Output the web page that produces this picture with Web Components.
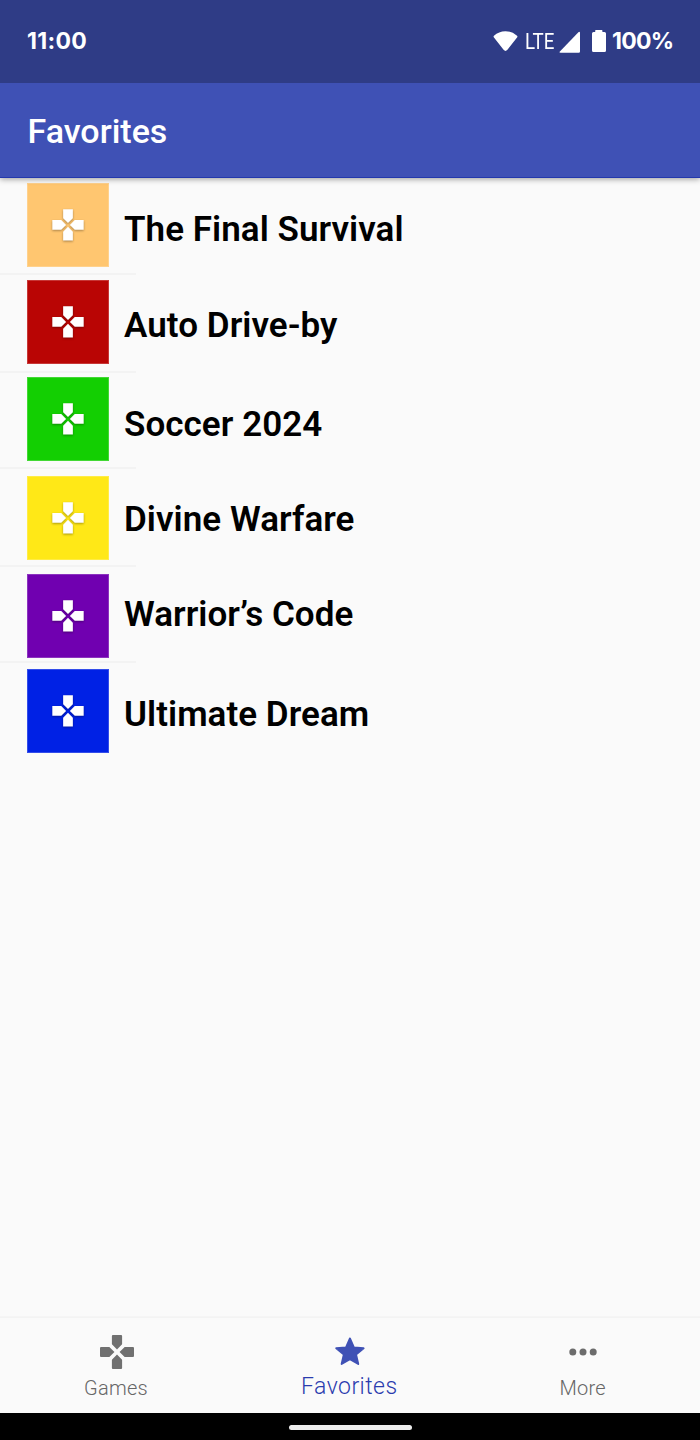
<!DOCTYPE html>
<html lang="en">
<head>
<meta charset="utf-8">
<title>Favorites</title>
<style>
body{margin:0;background:#fafafa;font-family:Roboto,sans-serif}
</style>
</head>
<body>
<game-app></game-app>
<script>
const define=(name,html)=>{
  const t=document.createElement('template');t.innerHTML=html;
  customElements.define(name,class extends HTMLElement{
    connectedCallback(){
      if(this.shadowRoot)return;
      this.attachShadow({mode:'open'}).append(t.content.cloneNode(true));
    }
  });
};
define('status-bar',`<style>
:host{box-sizing:border-box;height:83px;padding:0 27px;display:flex;align-items:center;background:#2f3c86;color:#fff;font:700 23px/24px Inter,sans-serif}
.time{flex:1;letter-spacing:.3px;margin-top:-1px}
.pct{margin-top:-1px;width:61px;white-space:nowrap;letter-spacing:-.7px}
svg{display:block}
.lte{font:400 22px/24px Roboto,sans-serif;width:29px;margin:0 5px 0 7px}
.lte span{display:inline-block;transform:scaleX(.85);transform-origin:left}
</style>
<span class="time">11:00</span>
<svg width="25" height="22" viewBox="0 0 26 22" style="margin-top:-1px"><path fill="#fff" d="M.8 7Q.2 6.200 1 5.500Q6 .8 13 .8T25 5.500Q25.800 6.200 25.200 7L15 20.200Q13 22.400 11 20.200Z"/></svg>
<span class="lte"><span>LTE</span></span>
<svg width="22" height="22" viewBox="0 0 22 22"><path fill="#fff" d="M21 2v18.500q0 1.300-1.300 1.300H1.500q-1.800 0-.6-1.300L19.400 1.200q1.600-1.300 1.600.8z"/></svg>
<svg width="16" height="24" viewBox="0 0 16 24" style="margin:-1px 5px 0 10px"><path fill="#fff" d="M2.500 3H4.200V1.600Q4.200 1 4.800 1H10.800Q11.400 1 11.400 1.600V3H13.500Q15 3 15 4.500V21.500Q15 23 13.500 23H2.500Q1 23 1 21.500V4.500Q1 3 2.500 3Z"/></svg>
<span class="pct">100%</span>`);
define('app-bar',`<style>:host{display:flex;align-items:center;box-sizing:border-box;height:95px;padding:2px 27.5px 0;background:#3f51b5;color:#fff;font-weight:500;font-size:34px;border-bottom:1px solid #2338ad;box-shadow:0 1px 6px rgba(0,0,0,.4);clip-path:inset(0 0 -12px 0)}</style><slot></slot>`);
define('game-row',`<style>
:host{display:block}
.r{display:flex;box-sizing:border-box;height:var(--h);padding-left:27px;align-items:flex-start;background:linear-gradient(#f3f3f3,#f3f3f3) left bottom/136px 2px no-repeat}
:host(:last-of-type) .r{background:none}
.t{box-sizing:border-box;width:82px;height:84px;margin-top:var(--ty);background:var(--c);box-shadow:inset 0 0 0 1px rgba(255,255,255,.2);display:flex;align-items:center;justify-content:center}
svg{display:block;width:32px;height:32px;overflow:visible;filter:drop-shadow(0 1px 1px rgba(0,0,0,.35))}
.n{margin:var(--ny) 0 0 15px;font-weight:600;font-size:35px;line-height:40px;letter-spacing:.05px;color:#000;white-space:nowrap}
</style>
<div class="r"><div class="t"><svg viewBox="1.800 1.850 20.400 20.400" fill="#fff"><path d="M15.100 7.700V2H8.900v5.700l3.100 3.100zM7.700 8.900H2v6.200h5.700l3.100-3.100zM8.900 16.300V22h6.200v-5.700L12 13.200zM16.300 8.900L13.200 12l3.100 3.100H22V8.900z"/></svg></div><div class="n"><slot></slot></div></div>`);
define('nav-item',`<style>
:host{flex:1;display:flex;flex-direction:column;align-items:center;color:#666;font-size:20px;font-weight:360;letter-spacing:.25px}
.i{height:35px;margin-top:16px;display:flex;align-items:center}
.l{margin-top:7px;line-height:24px;position:relative;left:-.7px}
:host([active]){color:#2a3cae;font-size:23px;letter-spacing:.45px}
:host([active]) .l{margin-top:6px}
</style>
<div class="i"><slot name="icon"></slot></div><div class="l"><slot></slot></div>`);
define('game-app',`<style>
:host{display:flex;flex-direction:column;width:700px;height:1440px;overflow:hidden}
app-bar{position:relative;z-index:1}
main{flex:1}
nav{display:flex;height:96px;border-top:1px solid #f3f3f3;box-shadow:0 -1px 1px rgba(0,0,0,.02);box-sizing:border-box}
.home{height:27px;background:#000;display:flex;justify-content:center;align-items:center}
.home i{width:123px;height:5px;border-radius:3px;background:#ececec;margin-top:2px}
</style>
<status-bar></status-bar><app-bar>Favorites</app-bar>
<main>
<game-row style="--h:97px;--ty:5px;--ny:32px;--c:#ffc670">The Final Survival</game-row>
<game-row style="--h:98px;--ty:5px;--ny:31px;--c:#b90504">Auto Drive-by</game-row>
<game-row style="--h:96px;--ty:4px;--ny:32px;--c:#13cf02">Soccer 2024</game-row>
<game-row style="--h:98px;--ty:7px;--ny:31px;--c:#ffe817">Divine Warfare</game-row>
<game-row style="--h:96px;--ty:7px;--ny:28px;--c:#7000b0">Warrior’s Code</game-row>
<game-row style="--h:97px;--ty:6px;--ny:32px;--c:#0021e5">Ultimate Dream</game-row>
</main>
<nav>
<nav-item><svg slot="icon" width="34" height="34" viewBox="2 2 20 20" fill="#707070"><path d="M15 7.500V2.600Q15 2 14.400 2H9.600Q9 2 9 2.600V7.500l3 3zM7.500 9H2.600Q2 9 2 9.600v4.800q0 .6.6.6H7.500l3-3zM9 16.500v4.900q0 .6.6.6h4.800q.6 0 .6-.6v-4.900l-3-3zM16.500 9l-3 3 3 3h4.900q.6 0 .6-.6V9.600Q22 9 21.400 9z"/></svg>Games</nav-item>
<nav-item active><svg slot="icon" width="35" height="35" viewBox="-.3 -.3 24 24" fill="#3f51b5" stroke="#3f51b5" stroke-width="1.300" stroke-linejoin="round"><path d="M12 16.900L17.700 20.300l-1.500-6.500L21.400 9.500l-6.700-.6L12 2.700 9.300 8.900 2.600 9.500l5.200 4.300L6.300 20.300z"/></svg>Favorites</nav-item>
<nav-item><svg slot="icon" width="28" height="8" viewBox="0 0 28 8" fill="#6c6c6c"><circle cx="3.800" cy="4" r="3.500"/><circle cx="14" cy="4" r="3.500"/><circle cx="24.200" cy="4" r="3.500"/></svg>More</nav-item>
</nav><div class="home"><i></i></div>`);
</script>
</body>
</html>
